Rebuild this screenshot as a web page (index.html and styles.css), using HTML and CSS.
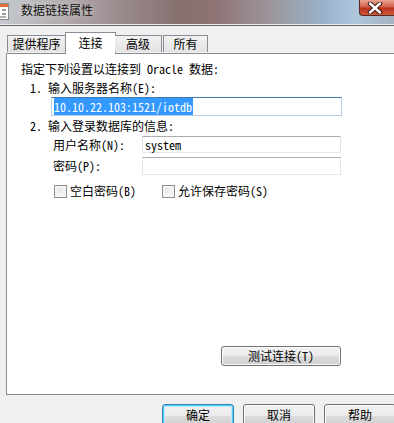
FILE: index.html
```html
<!DOCTYPE html>
<html lang="zh-CN">

<head>
    <meta charset="UTF-8">
    <title>数据链接属性</title>
    <link rel="stylesheet" href="styles.css">
</head>

<body>
    <div class="titlebar">
        <svg class="app-icon" width="16" height="18" viewBox="0 0 16 18">
            <rect x="0.5" y="1.5" width="15" height="16" fill="#fdfdfd" stroke="#8a8a8a" />
            <rect x="1" y="2" width="14" height="3" fill="#e0703a" />
            <rect x="3" y="7" width="4" height="2" fill="#d9534f" />
            <rect x="9" y="7" width="4" height="2" fill="#9a9a9a" />
            <rect x="3" y="11" width="4" height="2" fill="#d9534f" />
            <rect x="9" y="11" width="4" height="2" fill="#9a9a9a" />
            <rect x="3" y="14" width="10" height="2" fill="#b0b0b0" />
        </svg>
        <span class="title">数据链接属性</span>
        <div class="close-btn">
            <svg width="20" height="12" viewBox="0 0 20 12">
                <path d="M5 1.5 L15 10.5 M15 1.5 L5 10.5" stroke="#3a1a14" stroke-width="4.5" stroke-linecap="round" />
                <path d="M5 1.5 L15 10.5 M15 1.5 L5 10.5" stroke="#ffffff" stroke-width="2.4" stroke-linecap="round" />
            </svg>
        </div>
    </div>

    <div class="tabs">
        <div class="tab">提供程序</div>
        <div class="tab active">连接</div>
        <div class="tab">高级</div>
        <div class="tab">所有</div>
    </div>

    <div class="panel">
        <div class="line intro">指定下列设置以连接到 Oracle 数据:</div>
        <div class="line step">1. 输入服务器名称(E):</div>
        <div class="field server"><span class="selected">10.10.22.103:1521/iotdb</span></div>
        <div class="line step step2">2. 输入登录数据库的信息:</div>
        <div class="row user-row">
            <span class="label">用户名称(N):</span>
            <div class="field small">system</div>
        </div>
        <div class="row pw-row">
            <span class="label">密码(P):</span>
            <div class="field small"></div>
        </div>
        <div class="checks">
            <label class="check"><span class="box"></span>空白密码(B)</label>
            <label class="check second"><span class="box"></span>允许保存密码(S)</label>
        </div>
        <div class="test-row">
            <div class="btn test">测试连接(T)</div>
        </div>
    </div>

    <div class="footer">
        <div class="btn default">确定</div>
        <div class="btn">取消</div>
        <div class="btn">帮助</div>
    </div>
</body>

</html>
```

FILE: styles.css
```css
* {
    box-sizing: border-box;
}

html,
body {
    margin: 0;
    padding: 0;
}

body {
    width: 394px;
    height: 423px;
    overflow: hidden;
    background: #f0f0f0;
    font-family: "Noto Sans Mono CJK SC", "Noto Sans CJK SC", "Liberation Mono", monospace;
    font-size: 12px;
    color: #000;
}

.titlebar {
    height: 26px;
    display: flex;
    align-items: flex-start;
    background: linear-gradient(90deg, #c4c9cf 0%, #b3abae 16%, #98888a 32%, #86706f 46%, #8e7274 54%, #9c9499 68%, #98b2ca 82%, #aec6dc 90%, #a6b3c1 100%);
    border-bottom: 1px solid #5f6166;
    box-shadow: inset 0 -1px 0 #e9ebee;
}

.app-icon {
    margin-left: -7px;
    margin-top: 2px;
}

.title {
    margin-left: 12px;
    margin-top: 3px;
    line-height: 14px;
    color: #101010;
    text-shadow: 0 0 6px rgba(255, 255, 255, 0.6);
}

.close-btn {
    margin-left: auto;
    width: 38px;
    height: 16px;
    margin-right: -3px;
    border: 1px solid #5a2a22;
    border-top: none;
    border-radius: 0 0 0 4px;
    background: linear-gradient(#e9a493 0%, #d2614a 45%, #b9321c 55%, #cf5a3c 100%);
    display: flex;
    align-items: center;
    justify-content: center;
    padding-right: 6px;
}

.tabs {
    display: flex;
    align-items: flex-end;
    padding-left: 7px;
    margin-top: 6px;
    height: 21px;
    position: relative;
    z-index: 1;
}

.tab {
    height: 17px;
    line-height: 15px;
    padding: 0 4px;
    text-align: center;
    border: 1px solid #898c95;
    border-bottom: none;
    background: linear-gradient(#f2f2f2, #e2e2e2);
    margin-bottom: 1px;
}

.tab:nth-child(1) {
    width: 59px;
}

.tab:nth-child(3) {
    width: 47px;
    border-left: none;
}

.tab:nth-child(4) {
    width: 45px;
    margin-left: 1px;
}

.tab.active {
    width: 51px;
    height: 22px;
    line-height: 19px;
    background: #fff;
    margin-bottom: -1px;
    margin-left: -1px;
    margin-right: -1px;
}

.panel {
    margin-left: 6px;
    width: 400px;
    height: 342px;
    background: #fff;
    border: 1px solid #898c95;
    padding: 8px 0 0 14px;
    display: flex;
    flex-direction: column;
}

.line {
    line-height: 14px;
    height: 14px;
}

.step {
    margin-top: 5px;
    padding-left: 9px;
}

.step2 {
    margin-top: 3px;
}

.field {
    border: 1px solid #dbdfe6;
    border-top-color: #abadb3;
    background: #fff;
    line-height: 15px;
    padding-left: 2px;
}

.field.server {
    margin-top: 2px;
    margin-left: 30px;
    width: 291px;
    height: 19px;
    border-color: #b5cfe7;
    border-top-color: #3d7bad;
    padding-top: 1px;
}

.selected {
    background: #3399ff;
    color: #fff;
    padding-right: 1px;
}

.row {
    display: flex;
    align-items: center;
    padding-left: 32px;
}

.user-row {
    margin-top: 3px;
}

.pw-row {
    margin-top: 4px;
}

.label {
    width: 89px;
    line-height: 14px;
}

.field.small {
    width: 199px;
    height: 17px;
    border-color: #e3e5ea;
    border-top-color: #abadb3;
}

.pw-row .field.small {
    height: 18px;
}

.checks {
    display: flex;
    margin-top: 9px;
    padding-left: 33px;
    line-height: 14px;
}

.check {
    display: flex;
    align-items: center;
    gap: 3px;
}

.check.second {
    margin-left: 26px;
}

.box {
    width: 13px;
    height: 13px;
    border: 1px solid #8e8f8f;
    background: linear-gradient(135deg, #dcdcdc, #ffffff);
    box-shadow: inset 0 0 0 2px #f4f4f4;
}

.test-row {
    margin-top: auto;
    margin-bottom: 28px;
    padding-left: 200px;
}

.btn {
    width: 72px;
    height: 20px;
    line-height: 18px;
    text-align: center;
    border: 1px solid #707070;
    border-radius: 3px;
    background: linear-gradient(#f2f2f2 0%, #ebebeb 50%, #dddddd 50%, #cfcfcf 100%);
    box-shadow: inset 0 0 0 1px #fcfcfc;
}

.btn.test {
    width: 120px;
}

.footer {
    display: flex;
    gap: 9px;
    padding-left: 162px;
    margin-top: 9px;
}

.footer .btn {
    height: 23px;
    line-height: 20px;
    flex-shrink: 0;
}

.btn.default {
    border-color: #3c7fb1;
    box-shadow: inset 0 0 0 1px #48d2fb, inset 0 0 0 2px #bde8fb;
}
```
